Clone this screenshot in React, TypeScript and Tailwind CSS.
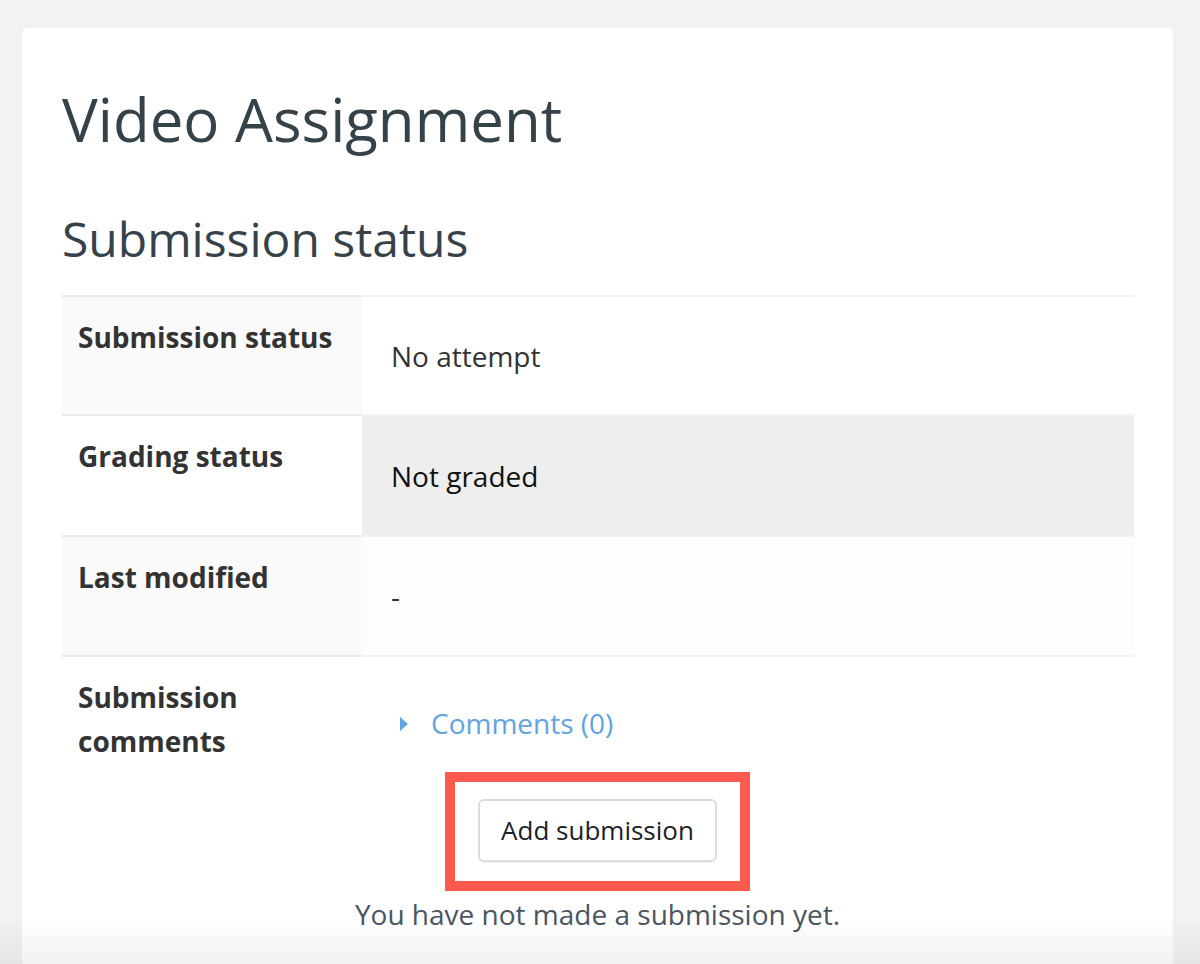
import React from "react";

const font = { fontFamily: '"Open Sans", "Noto Sans", sans-serif' };

export default function App() {
  return (
    <div className="relative min-h-[964px] bg-[#f1f2f4] pt-[28px] overflow-hidden" style={font}>
      <div className="ml-[22px] w-[1151px] min-h-[960px] rounded-[5px] bg-white px-[40px] pt-[55px]">
        <h1 className="text-[60px] leading-[72px] text-[#36424a] font-normal">Video Assignment</h1>
        <h2 className="mt-[56px] text-[48px] leading-[56px] text-[#36424a] font-normal">Submission status</h2>
        <div className="mt-[28px] w-[1072px] text-[28px] text-[#333333]">
          {/* Row 1 */}
          <div className="flex h-[119px]">
            <div className="w-[300px] shrink-0 border-t-2 border-[#e9eaec] bg-[#fafafa] pl-[16px] pt-[18px] font-bold leading-[44px] text-[#333]">
              Submission status
            </div>
            <div className="flex flex-1 items-center border-t-2 border-[#f3f3f3] bg-white pl-[29px] leading-[44px]">
              No attempt
            </div>
          </div>
          {/* Row 2 */}
          <div className="flex h-[121px]">
            <div className="w-[300px] shrink-0 border-t-2 border-[#e9eaec] bg-white pl-[16px] pt-[18px] font-bold leading-[44px] text-[#333]">
              Grading status
            </div>
            <div className="flex flex-1 items-center border-t-2 border-[#f3f3f3] bg-[#eeeeee] pl-[29px] leading-[44px] text-[#111]">
              Not graded
            </div>
          </div>
          {/* Row 3 */}
          <div className="flex h-[120px]">
            <div className="w-[300px] shrink-0 border-t-2 border-[#e9eaec] bg-[#fafafa] pl-[16px] pt-[18px] font-bold leading-[44px] text-[#333]">
              Last modified
            </div>
            <div className="flex flex-1 items-center border-t-2 border-[#f3f3f3] bg-[#fdfdfd] pl-[29px] leading-[44px]">
              -
            </div>
          </div>
          {/* Row 4 */}
          <div className="flex h-[117px]">
            <div className="w-[300px] shrink-0 border-t-2 border-[#e9eaec] bg-white pl-[16px] pt-[18px] font-bold leading-[44px] text-[#333]">
              Submission
              <br />
              comments
            </div>
            <div className="flex flex-1 items-start border-t-2 border-[#f3f3f3] bg-white pl-[37px] pt-[44px] leading-[44px]">
              <a className="flex items-center gap-[22px] text-[#62a3e2]" href="#">
                <svg width="10" height="16" viewBox="0 0 10 16" className="mt-[1px]">
                  <path d="M1 1 L9 8 L1 15 Z" fill="#62a3e2" />
                </svg>
                <span>Comments (0)</span>
              </a>
            </div>
          </div>
        </div>
        <div className="flex flex-col items-center">
          <div className="border-[10px] border-[#fd5a4f] px-[23px] pt-[17px] pb-[19px]">
            <button className="h-[63px] w-[239px] rounded-[6px] border-2 border-[#dcdcdc] bg-white text-[26px] text-[#1d2125] shadow-[0_1px_1px_rgba(0,0,0,0.05)]">
              Add submission
            </button>
          </div>
          <p className="mt-[1px] text-[28px] leading-[44px] text-[#4a5661]">You have not made a submission yet.</p>
        </div>
      </div>
      <div className="pointer-events-none absolute bottom-0 left-0 right-0 h-[72px] bg-gradient-to-b from-transparent to-black/[0.08]" />
    </div>
  );
}
